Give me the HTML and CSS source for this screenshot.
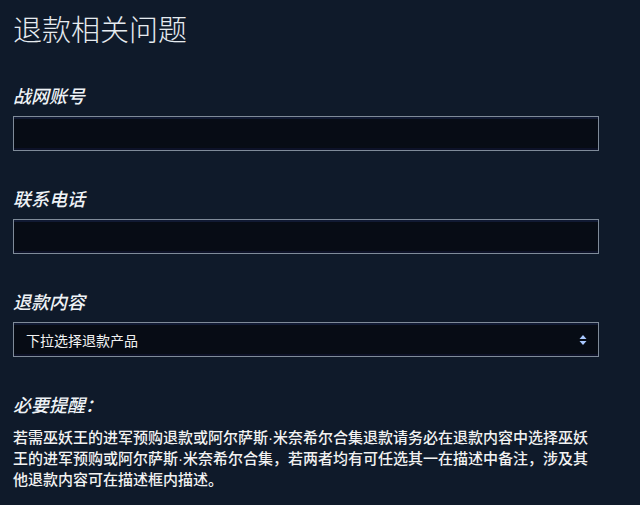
FILE: index.html
```html
<!DOCTYPE html>
<html lang="zh-CN">
<head>
    <meta charset="UTF-8">
    <title>退款相关问题</title>
    <link rel="stylesheet" href="styles.css">
</head>
<body>
    <div class="page">
        <h1 class="title">退款相关问题</h1>

        <div class="form">
            <div class="field">
                <label class="field-label">战网账号</label>
                <input class="field-input" type="text">
            </div>
            <div class="field">
                <label class="field-label">联系电话</label>
                <input class="field-input" type="text">
            </div>
            <div class="field">
                <label class="field-label">退款内容</label>
                <div class="select">
                    <span>下拉选择退款产品</span>
                    <svg class="select-arrows" width="8" height="12" viewBox="0 0 8 12">
                        <path d="M4 1 L7.5 5 L0.5 5 Z" fill="#a9c8ff"/>
                        <path d="M4 11 L7.5 7 L0.5 7 Z" fill="#a9c8ff"/>
                    </svg>
                </div>
            </div>
            <div class="notice">
                <div class="field-label">必要提醒：</div>
                <p class="notice-text">若需巫妖王的进军预购退款或阿尔萨斯·米奈希尔合集退款请务必在退款内容中选择巫妖王的进军预购或阿尔萨斯·米奈希尔合集，若两者均有可任选其一在描述中备注，涉及其他退款内容可在描述框内描述。</p>
            </div>
        </div>
    </div>
</body>
</html>
```

FILE: styles.css
```css
body {
    margin: 0;
    padding: 0;
    background-color: #0f1a2a;
    color: #e8edf2;
    font-family: "Liberation Sans", "Noto Sans CJK SC", sans-serif;
}
.page {
    padding: 14px 41px 0 13px;
}
.title {
    font-size: 29px;
    line-height: 35px;
    font-weight: 300;
    margin: 0;
    color: #e6ebf0;
}
.form {
    display: flex;
    flex-direction: column;
    gap: 37px;
    margin-top: 36px;
}
.field {
    display: flex;
    flex-direction: column;
    gap: 7px;
}
.field-label {
    font-size: 18px;
    line-height: 24px;
    font-style: italic;
    font-weight: 500;
    color: #eef2f6;
}
.field-input,
.select {
    box-sizing: border-box;
    height: 35px;
    width: 100%;
    margin: 0;
    border: 1px solid #7f8b99;
    background-color: #070c15;
    box-shadow: inset 0 2px 0 #111a33, inset 0 -2px 0 #0d1228;
    outline: none;
}
.select {
    display: flex;
    align-items: center;
    justify-content: space-between;
    padding: 0 11px 0 12px;
    font-size: 14px;
    color: #f2f2f2;
}
.select-arrows {
    display: block;
}
.notice-text {
    margin: 9px 0 0;
    font-size: 15px;
    line-height: 21px;
    font-weight: 500;
    color: #f2f2f2;
}
```
